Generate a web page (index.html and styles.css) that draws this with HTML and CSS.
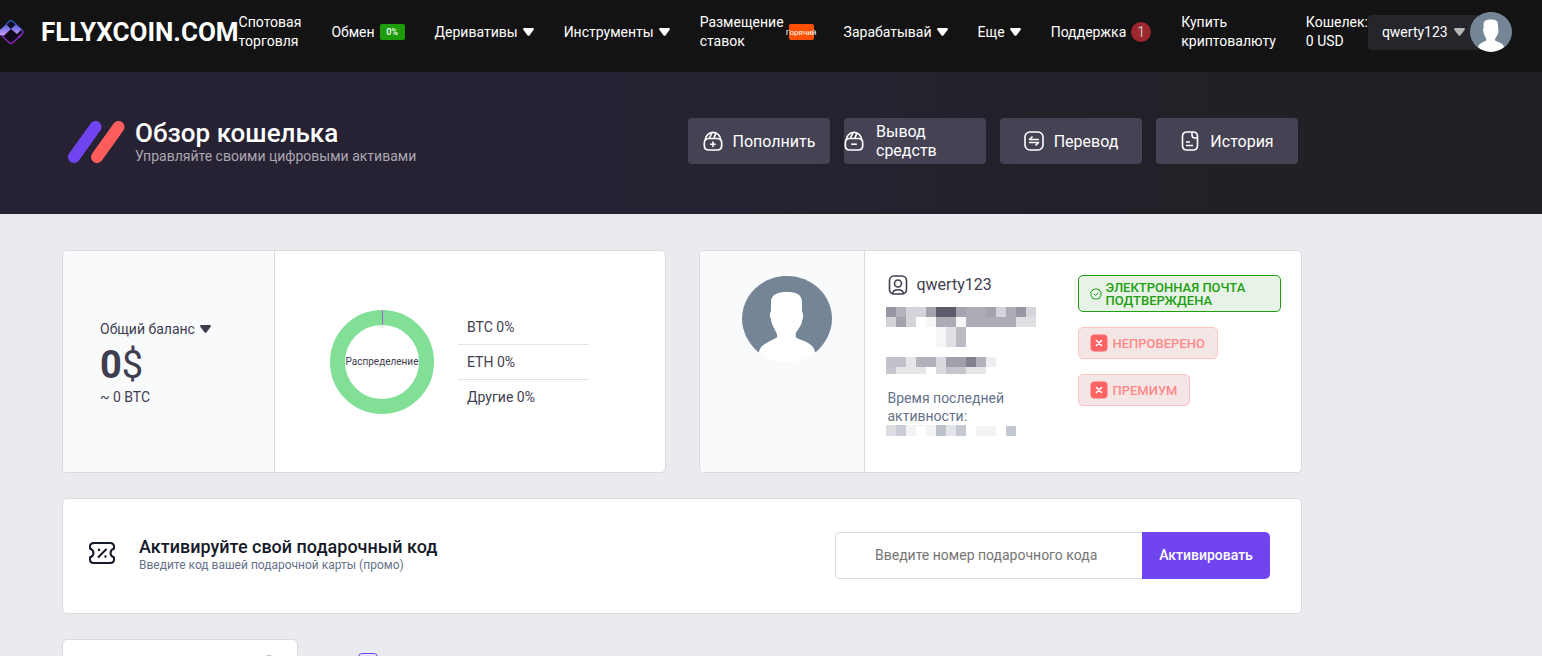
FILE: index.html
```
<!DOCTYPE html>
<html lang="ru">
<head>
<meta charset="utf-8">
<meta name="viewport" content="width=device-width, initial-scale=1">
<title>Обзор кошелька</title>
<link rel="stylesheet" href="styles.css">
</head>
<body>
<svg class="defs" width="0" height="0" aria-hidden="true">
  <symbol id="caret" viewBox="0 0 11 8"><path d="M1.400 0h8.200C10.800 0 11.300 1.200 10.500 2L6.600 7.300Q5.500 8.300 4.400 7.300L.5 2C-.3 1.200.2 0 1.400 0z" fill="currentColor"/></symbol>
  <symbol id="person" viewBox="0 0 90 86" preserveAspectRatio="none">
    <path d="M0 43C0 19 20 0 45 0s45 19 45 43c0 12-6 24-16 33H16C6 67 0 55 0 43z" fill="#748596"/>
    <path d="M17 76c1-7 9-10 17-14 2-1 1-4 0-6-2-4-5-9-5-13-2-4-1-6 0-8V25c1-7 7-9 16-9s14 2 15 9v10c1 3 2 5 0 10 0 4-4 8-6 12-1 4 0 5 3 6 8 3 15 6 16 13-8 6-17 10-28 10s-21-4-28-10z" fill="#fff"/>
  </symbol>
  <symbol id="bag" viewBox="0 0 20 20"><g fill="none" stroke="currentColor" stroke-width="1.700"><path d="M1.300 12v2.500c0 3 1.500 4.500 4.500 4.500h8.400c3 0 4.500-1.500 4.500-4.500V12c0-3-1.500-4.500-4.500-4.500H5.800c-3 0-4.500 1.500-4.500 4.500z"/><path d="M2.300 9.500C2.300 5 5.500 1.300 10 1.300s7.700 3.700 7.700 8.200"/><path d="m6.500 7 2.300-5M11 7l1.700-4.500"/></g></symbol>
  <symbol id="cross" viewBox="0 0 18 18"><rect x=".5" y=".5" width="17" height="17" rx="4" fill="#ff6464"/><path d="m6.500 6.500 5 5m0-5-5 5" stroke="#fff" stroke-width="1.600" stroke-linecap="round"/></symbol>
</svg>

<header class="topbar">
  <a class="brand" href="#">
    <svg class="brand-mark" width="26" height="26" viewBox="0 0 26 26" aria-hidden="true">
      <defs><linearGradient id="edge" x1="0" y1="0" x2="0" y2="1"><stop offset="0" stop-color="#2457a8"/><stop offset=".5" stop-color="#6332b4"/><stop offset="1" stop-color="#8b1fa8"/></linearGradient>
      <linearGradient id="tile" x1="0" y1="0" x2="0" y2="1"><stop offset="0" stop-color="#4f62e0"/><stop offset="1" stop-color="#d39bff"/></linearGradient></defs>
      <path d="M11 2.500Q13 .5 15 2.500L24 11Q26 13 24 15L15 23.500Q13 25.500 11 23.500L1 14Z" fill="#120b1d" stroke="url(#edge)" stroke-width="1.600"/>
      <path d="M8.500 5.500 13 10 6 16.500 2 16 0 13.500v-1zM17.500 5.500l6 5-4.500 4.500-6-5z" fill="url(#tile)"/>
      <path d="m19.500 18 2.500-2.500 2 1-3 3z" fill="#7c2bb0"/>
    </svg>
    <span class="brand-name">FLLYXCOIN.COM</span>
  </a>
  <nav class="nav">
    <a href="#">Спотовая<br>торговля</a>
    <a href="#">Обмен <span class="tag tag-green">0%</span></a>
    <a href="#">Деривативы <svg class="caret"><use href="#caret"/></svg></a>
    <a href="#">Инструменты <svg class="caret"><use href="#caret"/></svg></a>
    <a href="#">Размещение<br>ставок <span class="tag tag-orange">Горячий</span></a>
    <a href="#">Зарабатывай <svg class="caret"><use href="#caret"/></svg></a>
    <a href="#">Еще <svg class="caret"><use href="#caret"/></svg></a>
    <a href="#">Поддержка <span class="count">1</span></a>
    <a href="#">Купить<br>криптовалюту</a>
    <a href="#">Кошелек:<br>0 USD</a>
  </nav>
  <button class="user" type="button">qwerty123 <svg class="caret"><use href="#caret"/></svg></button>
  <svg class="user-photo" width="42" height="40"><use href="#person"/></svg>
</header>

<section class="hero">
  <div class="wrap hero-row">
    <svg width="57" height="44" viewBox="0 0 57 44" aria-hidden="true"><path d="M6 37 27.500 7" stroke="#7045f0" stroke-width="12" stroke-linecap="round"/><path d="M29 37 50.500 7" stroke="#ff5c5c" stroke-width="12" stroke-linecap="round"/></svg>
    <div class="hero-text">
      <h1>Обзор кошелька</h1>
      <p>Управляйте своими цифровыми активами</p>
    </div>
    <div class="actions">
      <button class="action" type="button"><svg width="20" height="20" viewBox="0 0 20 20"><use href="#bag"/><path d="M10 10.500v5.500M7.200 13.200h5.600" stroke="currentColor" stroke-width="1.600"/></svg>Пополнить</button>
      <button class="action action-long" type="button"><svg width="20" height="20" viewBox="0 0 20 20"><use href="#bag"/><path d="M7.200 13.200h5.600" stroke="currentColor" stroke-width="1.600"/></svg><span>Вывод<br>средств</span></button>
      <button class="action" type="button"><svg width="20" height="20" viewBox="0 0 20 20" fill="none" stroke="currentColor" stroke-width="1.600"><rect x="1" y="1" width="18" height="18" rx="5"/><path d="M15 8.500H5.500L8.500 5.500M5 11.500h9.500l-3 3" stroke-linejoin="round"/></svg>Перевод</button>
      <button class="action" type="button"><svg width="20" height="20" viewBox="0 0 20 20" fill="none" stroke="currentColor" stroke-width="1.600"><path d="M17.500 6.500v8c0 3-1.500 4.500-4.500 4.500H7c-3 0-4.500-1.500-4.500-4.500v-9C2.500 2.500 4 1 7 1h6c3 0 4.500 1.500 4.500 4.500v1M12 1v3c0 2 1 3 3 3h2.500M6 11h4M6 14.500h7"/></svg>История</button>
    </div>
  </div>
</section>

<main class="wrap">
  <div class="pair">
    <section class="card balance">
      <div class="side balance-side">
        <button class="balance-label" type="button">Общий баланс <svg class="caret"><use href="#caret"/></svg></button>
        <div class="amount"><b>0</b>$</div>
        <div class="approx">~ 0 BTC</div>
      </div>
      <div class="split">
        <div class="donut">
          <svg width="104" height="104" viewBox="0 0 104 104"><circle cx="52" cy="52" r="44.500" fill="none" stroke="#82df96" stroke-width="15"/><path d="M52.500 0v15" stroke="#a264d0"/></svg>
          <span>Распределение</span>
        </div>
        <ul class="shares"><li>BTC 0%</li><li>ETH 0%</li><li>Другие 0%</li></ul>
      </div>
    </section>
    <section class="card profile">
      <div class="side photo-side"><svg width="90" height="86"><use href="#person"/></svg></div>
      <div class="details">
        <div class="name"><svg width="20" height="20" viewBox="0 0 20 20" fill="none" stroke="currentColor" stroke-width="1.600"><rect x="1.500" y="1" width="17" height="18" rx="4.500"/><circle cx="10" cy="8.500" r="3.500"/><path d="M4.500 18.500c1-5 10-5 11 0"/></svg>qwerty123</div>
        <svg class="mosaic" width="150" height="67" viewBox="0 0 150 67" shape-rendering="crispEdges" aria-hidden="true">
          <path fill="#9797a3" d="M0 0h10v10H0zM130 0h10v10h-10z"/><path fill="#b3b3ba" d="M10 0h10v10H10z"/><path fill="#d4d4da" d="M20 0h20v10H20zM140 0h10v10h-10zM0 10h10v10H0zM20 10h10v10H20zM110 0h10v10h-10z"/>
          <path fill="#a3a3ae" d="M40 0h10v10H40zM70 0h10v10H70zM10 10h10v10H10zM100 0h10v10h-10z"/><path fill="#5d5b6b" d="M50 0h20v10H50z"/><path fill="#acacb6" d="M80 0h20v10H80zM120 0h10v10h-10zM50 10h20v10H50zM80 10h50v10H80z"/>
          <path fill="#f6f6f7" d="M40 10h10v10H40zM70 10h10v10H70zM50 20h10v20H50z"/><path fill="#e0e0e4" d="M130 10h20v10h-20zM60 20h10v20H60z"/><path fill="#bcbbc3" d="M70 20h10v20H70z"/>
          <path fill="#c1c1c9" d="M0 50h20v10H0z"/><path fill="#e6e6e9" d="M20 50h10v10H20zM10 60h30v7H10zM80 60h20v7H80z"/><path fill="#b2b2bb" d="M30 50h20v10H30zM90 50h10v10H90z"/><path fill="#d9d9df" d="M50 50h10v20H50z"/><path fill="#a0a0aa" d="M60 50h20v10H60z"/><path fill="#82818f" d="M80 50h10v10H80z"/><path fill="#efeff2" d="M100 50h10v10h-10z"/><path fill="#c6c5cd" d="M0 60h10v7H0zM60 60h20v7H60z"/>
        </svg>
        <p class="activity">Время последней<br>активности:</p>
        <svg class="mosaic-small" width="130" height="11" viewBox="0 0 130 11" shape-rendering="crispEdges" aria-hidden="true"><path fill="#dcdce3" d="M0 0h10v11H0z"/><path fill="#c9cbd6" d="M10 0h10v11H10z"/><path fill="#f2f3f5" d="M20 0h10v11H20zM30 0h10v1H30zM40 0h10v11H40zM90 1h20v10H90z"/><path fill="#bdc1cb" d="M50 0h10v11H50z"/><path fill="#e4e5ea" d="M60 0h10v11H60z"/><path fill="#c4c8d0" d="M70 0h10v11H70zM120 1h10v10h-10z"/></svg>
      </div>
      <div class="badges">
        <div class="badge badge-ok"><svg width="12" height="12" viewBox="0 0 12 12" fill="none" stroke="currentColor"><path d="m6 .5 1.500 1 1.800 0 .5 1.700 1.500 1-.6 1.800.6 1.800-1.500 1-.5 1.700-1.800 0-1.500 1-1.500-1-1.800 0-.5-1.700-1.500-1L1.300 6 .7 4.200l1.500-1 .5-1.700 1.800 0zM4 6l1.500 1.500L8.200 4.700"/></svg><span>ЭЛЕКТРОННАЯ ПОЧТА<br>ПОДТВЕРЖДЕНА</span></div>
        <div class="badge"><svg width="18" height="18"><use href="#cross"/></svg>НЕПРОВЕРЕНО</div>
        <div class="badge"><svg width="18" height="18"><use href="#cross"/></svg>ПРЕМИУМ</div>
      </div>
    </section>
  </div>

  <section class="card gift">
    <svg class="gift-icon" width="28" height="24" viewBox="0 0 28 24" fill="none" stroke="#141929" stroke-width="2" stroke-linecap="round" aria-hidden="true"><path d="M2 7.500v-2C2 3 3.500 2 6 2h16c2.500 0 4 1 4 3.500v2c-2.500 1-3.500 2.700-3.500 4.500s1 3.500 3.500 4.500v2c0 2.500-1.500 3.500-4 3.500H6c-2.500 0-4-1-4-3.500v-2C4.500 15.500 5.500 13.800 5.500 12S4.500 8.500 2 7.500zM10.500 16 18 8.500"/><path d="M11 8.800v.1M17.500 15.500v.1" stroke-width="2.400"/></svg>
    <div class="gift-text">
      <h2>Активируйте свой подарочный код</h2>
      <p>Введите код вашей подарочной карты (промо)</p>
    </div>
    <form class="gift-form">
      <input type="text" placeholder="Введите номер подарочного кода" aria-label="Номер подарочного кода">
      <button type="button">Активировать</button>
    </form>
  </section>

  <div class="lower">
    <div class="card search"><svg width="12" height="12" viewBox="0 0 12 12" fill="none" stroke="#b9bcc5" stroke-width="2"><circle cx="5" cy="5" r="4"/><path d="m8 8 3 3"/></svg></div>
    <input class="tick" type="checkbox" aria-label="Скрыть нулевые балансы">
  </div>
</main>
</body>
</html>
```
FILE: styles.css
```
* { box-sizing: border-box; }

html, body { height: 100%; }

body {
  margin: 0;
  overflow: hidden;
  background: #eaebef;
  color: #3f3d50;
  font: 14px/18px Roboto, "Liberation Sans", sans-serif;
}

h1, h2, p, ul { margin: 0; padding: 0; }
a { color: inherit; text-decoration: none; }
button, input { font: inherit; color: inherit; border: 0; margin: 0; }
button { cursor: pointer; }
svg { flex: none; display: block; }

.defs { position: absolute; }
.caret { width: 11px; height: 8px; }

.topbar {
  display: flex;
  align-items: center;
  height: 72px;
  padding: 0 31px 8px 0;
  background: #131313;
  color: #fff;
  white-space: nowrap;
}
.brand { display: flex; align-items: center; gap: 17px; }
.brand-mark { margin-left: -2px; }
.brand-name { font-size: 26px; line-height: 32px; font-weight: 700; }
.nav { display: flex; align-items: center; gap: 30px; line-height: 19px; }
.nav a { display: flex; align-items: center; gap: 5px; }

.tag {
  display: flex;
  justify-content: center;
  align-items: center;
  width: 25px;
  height: 16px;
  border-radius: 2px;
  font-size: 9px;
  font-weight: 500;
}
.tag-green { background: #1d9c0c; }
.tag-orange { background: #ff4f00; font-size: 8px; font-weight: 400; }
.count {
  width: 20px;
  border-radius: 10px;
  background: #9c272e;
  color: #c9bcbd;
  line-height: 20px;
  text-align: center;
}
.user {
  display: flex;
  align-items: center;
  gap: 6px;
  height: 35px;
  padding: 0 17px 0 14px;
  border-radius: 4px;
  background: #25252b;
}
.user .caret { color: #b5b5b5; }
.user-photo { margin-left: -12px; position: relative; }

.wrap { max-width: 1302px; padding-left: 62px; }

.hero {
  height: 142px;
  padding-top: 46px;
  background: linear-gradient(90deg, #272233 40%, #221f25 85%);
  color: #fff;
}
.hero-row { display: flex; padding-left: 68px; padding-right: 4px; }
.hero-row > svg { margin-top: 2px; }
.hero-text { padding: 2px 0 0 10px; }
.hero-text h1 { font-size: 26px; line-height: 27px; font-weight: 500; }
.hero-text p { color: #aaa7b0; }
.actions { display: flex; gap: 14px; margin-left: auto; }
.action {
  display: flex;
  align-items: center;
  justify-content: center;
  gap: 10px;
  width: 142px;
  height: 46px;
  padding: 0;
  border-radius: 4px;
  background: #454254;
  font-size: 16px;
  line-height: 19px;
  text-align: left;
}
.action-long { justify-content: flex-start; gap: 12px; }

main { display: flex; flex-direction: column; gap: 25px; padding-top: 36px; }
.card { background: #fff; border: 1px solid #dadbde; border-radius: 5px; }
.pair { display: grid; grid-template-columns: 1fr 1fr; gap: 33px; }
.balance, .profile { display: flex; min-height: 223px; overflow: hidden; }
.side { background: #f9fafc; border-right: 1px solid #dadbde; }

.balance-side { width: 212px; padding: 69px 0 0 37px; }
.balance-label { display: flex; align-items: center; gap: 5px; padding: 0; background: none; }
.amount { padding-top: 4px; font-size: 38px; line-height: 46px; }
.amount b { font-weight: 700; }

.split { display: flex; padding: 59px 0 0 55px; gap: 24px; }
.donut { display: grid; place-items: center; height: 104px; font-size: 10px; }
.donut > * { grid-area: 1 / 1; }
.shares { list-style: none; width: 131px; }
.shares li { padding: 8px 9px; }
.shares li + li { border-top: 1px solid #e3e3e5; }

.photo-side { width: 165px; padding: 25px 0 0 42px; }
.details { padding: 24px 0 0 21px; width: 213px; }
.name { display: flex; align-items: center; gap: 9px; padding-left: 2px; font-size: 16px; line-height: 20px; }
.mosaic { margin: 12px 0 15px; }
.activity { padding-left: 2px; color: #67718a; }
.badges { display: flex; flex-direction: column; align-items: flex-start; gap: 15px; padding: 24px 20px 0 0; flex: 1; }
.badge {
  display: flex;
  align-items: center;
  gap: 5px;
  height: 32px;
  padding: 0 12px 0 11px;
  border: 1px solid #ffc0c0;
  border-radius: 5px;
  background: #f5e6e6;
  color: #ff8989;
  font-size: 13px;
  line-height: 13px;
  font-weight: 500;
}
.badge-ok {
  align-self: stretch;
  gap: 4px;
  height: 37px;
  border-color: #1e9e10;
  background: #e8f3e8;
  color: #1e9e10;
}

.gift { display: flex; align-items: center; min-height: 116px; padding: 0 31px 2px 25px; }
.gift-icon { margin-bottom: 4px; }
.gift-text { padding-left: 23px; }
.gift-text h2 { color: #141929; font-size: 18px; line-height: 20px; font-weight: 500; }
.gift-text p { color: #67718a; font-size: 12px; line-height: 16px; }
.gift-form { display: flex; width: 435px; height: 47px; margin-left: auto; }
.gift-form input {
  flex: 1;
  min-width: 0;
  padding: 0 39px;
  border: 1px solid #dadbde;
  border-right: 0;
  border-radius: 5px 0 0 5px;
  background: #fff;
}
.gift-form input::placeholder { color: #757575; opacity: 1; }
.gift-form button {
  width: 128px;
  padding: 0;
  border-radius: 0 5px 5px 0;
  background: #7045f0;
  color: #fff;
  font-weight: 500;
}

.lower { display: flex; align-items: flex-start; gap: 60px; }
.search { display: flex; justify-content: flex-end; width: 236px; height: 48px; padding: 15px 21px; }
.tick {
  appearance: none;
  width: 20px;
  height: 20px;
  margin-top: 14px;
  border: 1px solid #7045f0;
  border-radius: 4px;
  background: #e6e1f8;
}
```
